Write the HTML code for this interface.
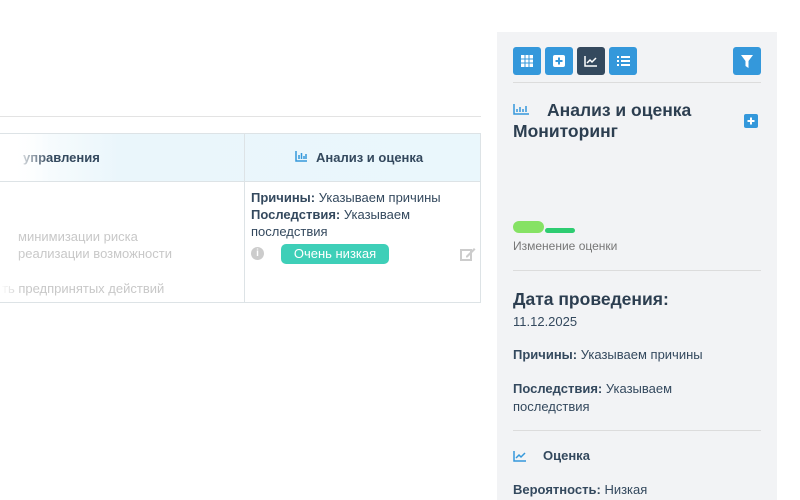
<!DOCTYPE html>
<html><head><meta charset="utf-8"><style>
body{margin:0;width:800px;height:500px;background:#fff;font-family:"Liberation Sans",sans-serif;position:relative;overflow:hidden;color:#34495e}
.a{position:absolute}
.btn{position:absolute;top:47px;width:28px;height:28px;border-radius:3px;background:#3498db}
.b{font-weight:bold}
.f{position:absolute;font-size:13px;color:#c8c8c8;white-space:nowrap}
</style></head><body>
<div class="a" style="left:0;top:116px;width:481px;height:1px;background:#e3e3e3"></div>
<div class="a" style="left:0;top:133px;width:480px;height:168px;border:1px solid #dde3e6;border-left:none"></div>
<div class="a" style="left:0;top:134px;width:480px;height:47px;background:linear-gradient(90deg,#fff 0,#eaf6fb 120px,#eaf7fc);border-bottom:1px solid #dde3e6"></div>
<div class="a" style="left:244px;top:134px;width:1px;height:168px;background:#dde3e6"></div>
<div class="a b" style="left:23px;top:150px;font-size:13px;color:#34495e">управления</div>
<div class="a" style="left:0;top:134px;width:50px;height:47px;background:linear-gradient(90deg,#fff 30%,rgba(255,255,255,0))"></div>
<svg class="a" style="left:295px;top:150px" width="13" height="12"><path d="M1 1v10h11" stroke="#3498db" stroke-width="1.5" fill="none"/><path d="M4 9V5M6.5 9V3M9 9V6M11 9V4" stroke="#3498db" stroke-width="1.5"/></svg>
<div class="a b" style="left:316px;top:150px;font-size:13px">Анализ и оценка</div>
<div class="f" style="left:18px;top:229px">минимизации риска</div>
<div class="f" style="left:18px;top:246px">реализации возможности</div>
<div class="f" style="left:2px;top:281px">ть предпринятых действий</div>
<div class="a" style="left:0;top:220px;width:22px;height:80px;background:linear-gradient(90deg,#fff,rgba(255,255,255,0))"></div>
<div class="a" style="left:251px;top:189px;font-size:13px;line-height:17px;width:225px"><span class="b">Причины:</span> Указываем причины<br><span class="b">Последствия:</span> Указываем последствия</div>
<div class="a" style="left:251px;top:247px;width:13px;height:13px;border-radius:50%;background:#ccc;color:#fff;font-size:10px;font-weight:bold;text-align:center;line-height:13px">i</div>
<div class="a" style="left:281px;top:244px;width:108px;height:20px;border-radius:5px;background:#3ecfb8;color:#fff;font-size:13px;text-align:center;line-height:20px">Очень низкая</div>
<svg class="a" style="left:460px;top:247px" width="16" height="14"><rect x="1" y="3" width="10" height="10" fill="none" stroke="#ccc" stroke-width="2"/><path d="M6 9l8-8 1.5 1.5-8 8H6z" fill="#ccc"/></svg>

<div class="a" style="left:497px;top:32px;width:280px;height:468px;background:#f2f3f5"></div>
<div class="btn" style="left:513px"><svg width="28" height="28"><path d="M8 8h12v12H8z" fill="#fff"/><path d="M12 8v12M16 8v12M8 12h12M8 16h12" stroke="#3498db"/></svg></div>
<div class="btn" style="left:545px"><svg width="28" height="28"><rect x="8" y="8" width="12" height="12" rx="2" fill="#fff"/><path d="M14 10.5v7M10.5 14h7" stroke="#3498db" stroke-width="2"/></svg></div>
<div class="btn" style="left:577px;background:#34495e"><svg width="28" height="28"><path d="M8 9v10h12" stroke="#fff" stroke-width="1.5" fill="none"/><path d="M10 16l3-3 2 2 4-4" stroke="#fff" stroke-width="1.5" fill="none"/></svg></div>
<div class="btn" style="left:609px"><svg width="28" height="28"><path d="M8 9h2v2H8zM8 13h2v2H8zM8 17h2v2H8z" fill="#fff"/><path d="M12 10h9M12 14h9M12 18h9" stroke="#fff" stroke-width="2"/></svg></div>
<div class="btn" style="left:733px"><svg width="28" height="28"><path d="M8 8h12l-4.5 6v7l-3-2v-5z" fill="#fff"/></svg></div>
<div class="a" style="left:513px;top:82px;width:248px;height:1px;background:#dcdcdc"></div>
<svg class="a" style="left:513px;top:103px" width="17" height="12"><path d="M1 1v10h15" stroke="#3498db" stroke-width="1.5" fill="none"/><path d="M4 9V6M7 9V4M10 9V6M13 9V3" stroke="#3498db" stroke-width="1.5"/></svg>
<div class="a b" style="left:513px;top:100px;font-size:17.5px;line-height:21px;width:220px;color:#2c3e50">&nbsp;&nbsp;&nbsp;&nbsp;&nbsp;&nbsp;&nbsp;Анализ и оценка<br>Мониторинг</div>
<div class="a" style="left:744px;top:114px;width:14px;height:14px;border-radius:2px;background:#3498db"><svg width="14" height="14"><path d="M7 3.5v7M3.5 7h7" stroke="#fff" stroke-width="2"/></svg></div>
<div class="a" style="left:513px;top:221px;width:31px;height:12px;border-radius:6px;background:#86e264"></div>
<div class="a" style="left:545px;top:228px;width:30px;height:5px;border-radius:3px;background:#2ecc71"></div>
<div class="a" style="left:513px;top:239px;font-size:12px;color:#777">Изменение оценки</div>
<div class="a" style="left:513px;top:270px;width:248px;height:1px;background:#dcdcdc"></div>
<div class="a b" style="left:513px;top:289px;font-size:17.5px;color:#2c3e50">Дата проведения:</div>
<div class="a" style="left:513px;top:314px;font-size:13px">11.12.2025</div>
<div class="a" style="left:513px;top:347px;font-size:13px"><span class="b">Причины:</span> Указываем причины</div>
<div class="a" style="left:513px;top:380px;font-size:13px;line-height:18px;width:220px"><span class="b">Последствия:</span> Указываем последствия</div>
<div class="a" style="left:513px;top:430px;width:248px;height:1px;background:#dcdcdc"></div>
<svg class="a" style="left:513px;top:450px" width="14" height="12"><path d="M1 1v10h12" stroke="#3498db" stroke-width="1.5" fill="none"/><path d="M3 8l3-3 2 2 4-4" stroke="#3498db" stroke-width="1.5" fill="none"/></svg>
<div class="a b" style="left:543px;top:448px;font-size:13px">Оценка</div>
<div class="a" style="left:513px;top:482px;font-size:13px"><span class="b">Вероятность:</span> Низкая</div>
</body></html>
